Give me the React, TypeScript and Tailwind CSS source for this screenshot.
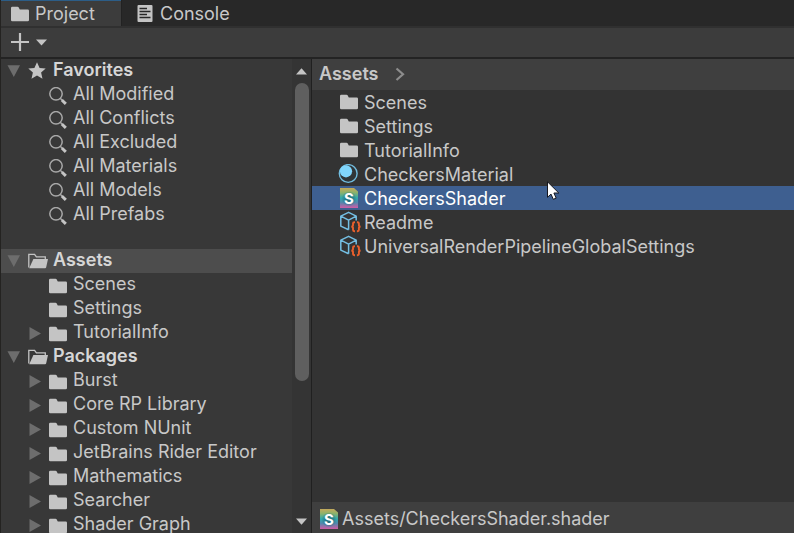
import type { ReactNode } from "react";

function Folder() {
  return (
    <svg viewBox="0 0 18 16" className="h-4 w-[18px] shrink-0" fill="#c4c4c4" aria-hidden="true">
      <path d="M0 2Q0 .7 1.3 .7H6.5Q7.3 .7 7.6 1.3L8.8 3.5H16.7Q18 3.5 18 4.8V14Q18 15.2 16.7 15.2H1.3Q0 15.2 0 14Z" />
    </svg>
  );
}

function OpenFolder() {
  return (
    <svg viewBox="0 0 20 16" className="h-4 w-5 shrink-0" aria-hidden="true">
      <path d="M.8 14.5V1.4H6.6L8.4 3.9H17.3V6.2" fill="none" stroke="#c4c4c4" strokeWidth="1.3" />
      <path d="M5.4 6H20L18.2 14.3Q18 15.2 17 15.2H1.2Z" fill="#c4c4c4" />
    </svg>
  );
}

function Star() {
  return (
    <svg viewBox="0 0 18 18" className="h-[18px] w-[18px] shrink-0" fill="#c4c4c4" aria-hidden="true">
      <path d="M9 .2 11.6 5.9 17.7 6.5 13.1 10.6 14.5 16.7 9 13.4 3.5 16.7 4.9 10.6 .3 6.5 6.4 5.9Z" />
    </svg>
  );
}

function Search() {
  return (
    <svg viewBox="0 0 18 18" className="h-[18px] w-[18px] shrink-0" fill="none" aria-hidden="true">
      <circle cx="7" cy="6.8" r="6.2" stroke="#a8a8a8" strokeWidth="1.5" />
      <path d="M11.2 11.3 13 13" stroke="#a8a8a8" strokeWidth="1.5" />
      <path d="M12.8 13 16.8 16.8" stroke="#c4c4c4" strokeWidth="3" />
    </svg>
  );
}

function Material() {
  return (
    <svg viewBox="0 0 20 20" className="h-5 w-5 shrink-0" aria-hidden="true">
      <circle cx="10.2" cy="9.5" r="8.9" fill="#303638" stroke="#72bde0" strokeWidth="1.4" />
      <circle cx="8" cy="7.3" r="6.1" fill="#80d6fd" />
    </svg>
  );
}

function Shader() {
  return (
    <svg viewBox="0 0 18 20" className="h-5 w-[18px] shrink-0" aria-hidden="true">
      <defs>
        <linearGradient id="shaderFill" x1="0" y1="0" x2="0" y2="1">
          <stop offset="0" stopColor="#c5a95b" />
          <stop offset=".22" stopColor="#8fb26a" />
          <stop offset=".5" stopColor="#2fa9ac" />
          <stop offset=".72" stopColor="#5287ad" />
          <stop offset="1" stopColor="#d05ca5" />
        </linearGradient>
        <radialGradient id="shaderGlow">
          <stop offset="0" stopColor="#17616b" />
          <stop offset=".5" stopColor="#1f7180" stopOpacity=".7" />
          <stop offset="1" stopColor="#1f7180" stopOpacity="0" />
        </radialGradient>
      </defs>
      <path d="M0 0H14L18 3.6V20H0Z" fill="url(#shaderFill)" />
      <circle cx="9" cy="10.8" r="7.6" fill="url(#shaderGlow)" />
      <text x="9" y="16" textAnchor="middle" fontFamily="Inter, sans-serif" fontWeight="700" fontSize="15" fill="#fff">S</text>
    </svg>
  );
}

function Scriptable() {
  return (
    <svg viewBox="0 0 22 22" className="h-[22px] w-[22px] shrink-0" fill="none" aria-hidden="true">
      <path d="M8.6 18.8 .8 15.1V5.2L8.6 1.3 16.2 5.2V9.6M.8 5.2 8.6 9.1 16.2 5.2M8.6 9.1V18.8" stroke="#74bfe3" strokeWidth="1.5" strokeLinejoin="round" />
      <g stroke="#ea602c" strokeWidth="1.9">
        <path d="M15 11.2H14.4Q13 11.2 13 12.6V14.2Q13 15.6 11.3 15.6Q13 15.6 13 17V18.8Q13 20.2 14.4 20.2H15" />
        <path d="M16.9 11.2H17.5Q18.9 11.2 18.9 12.6V14.2Q18.9 15.6 20.6 15.6Q18.9 15.6 18.9 17V18.8Q18.9 20.2 17.5 20.2H16.9" />
      </g>
    </svg>
  );
}

function Arrow({ open }: { open?: boolean }) {
  return (
    <svg viewBox="0 0 14 14" className="h-3.5 w-3.5 shrink-0" fill="#6d6d6d" aria-hidden="true">
      <path d={open ? "M.5 1.3H13L6.8 13Z" : "M1.5 1V14L13 7.5Z"} />
    </svg>
  );
}

function Root({ icon, children, selected }: { icon: ReactNode; children: string; selected?: boolean }) {
  return (
    <button type="button" aria-expanded="true" className={`flex h-6 w-full shrink-0 items-center pl-1.5 text-left font-semibold text-[#d6d6d6] ${selected ? "bg-[#4d4d4d]" : ""}`}>
      <Arrow open />
      <span className="ml-[7px] flex w-[25px] items-center">{icon}</span>
      <span className="pb-0.5 leading-5">{children}</span>
    </button>
  );
}

function Leaf({ icon, children, nested }: { icon: ReactNode; children: string; nested?: boolean }) {
  return (
    <button type="button" className="flex h-6 w-full shrink-0 items-center pl-[27px] text-left">
      <span className="flex w-[21px] items-center">{nested && <Arrow />}</span>
      <span className="flex w-6 items-center pt-0.5">{icon}</span>
      <span className="whitespace-nowrap pb-0.5 leading-5">{children}</span>
    </button>
  );
}

const favorites = ["All Modified", "All Conflicts", "All Excluded", "All Materials", "All Models", "All Prefabs"];
const packages = ["Burst", "Core RP Library", "Custom NUnit", "JetBrains Rider Editor", "Mathematics", "Searcher", "Shader Graph"];
const files: { name: string; icon: ReactNode; selected?: boolean }[] = [
  { name: "Scenes", icon: <Folder /> },
  { name: "Settings", icon: <Folder /> },
  { name: "TutorialInfo", icon: <Folder /> },
  { name: "CheckersMaterial", icon: <Material /> },
  { name: "CheckersShader", icon: <Shader />, selected: true },
  { name: "Readme", icon: <Scriptable /> },
  { name: "UniversalRenderPipelineGlobalSettings", icon: <Scriptable /> },
];

export default function App() {
  return (
    <div className="flex h-screen flex-col overflow-hidden border-l border-[#242321] bg-[#383838] font-['Inter',sans-serif] text-lg text-[#c8c8c8]">
      <div role="tablist" className="flex h-[26px] shrink-0 bg-[#282828]">
        <button type="button" role="tab" aria-selected="true" className="flex w-[120px] items-center border-t border-[#2c5d87] bg-[#3c3c3c] pl-2.5">
          <Folder />
          <span className="ml-[6px] leading-5">Project</span>
        </button>
        <button type="button" role="tab" aria-selected="false" className="flex items-center border-l border-[#222222] pl-[15px]">
          <svg viewBox="0 0 16 17" className="h-[17px] w-4" aria-hidden="true">
            <rect x=".5" width="15" height="17" rx="1" fill="#c4c4c4" />
            <path d="M2.5 3.5H10M2.5 6.5H13.5M2.5 9.5H10M2.5 12.5H13.5" stroke="#282828" strokeWidth="1.4" />
          </svg>
          <span className="ml-[7px] pt-0.5 leading-5">Console</span>
        </button>
      </div>

      <div className="flex h-[33px] shrink-0 items-center border-y-2 border-t-[#303030] border-b-[#232323] bg-[#3c3c3c] pb-px pl-2.5">
        <button type="button" aria-label="Create" className="flex items-center gap-[7px]">
          <svg viewBox="0 0 18 18" className="h-[18px] w-[18px]" aria-hidden="true">
            <path d="M0 9H18M9 0V18" stroke="#c4c4c4" strokeWidth="2.2" />
          </svg>
          <svg viewBox="0 0 11 7" className="h-[7px] w-[11px]" aria-hidden="true">
            <path d="M0 .5H11L5.5 6.5Z" fill="#c4c4c4" />
          </svg>
        </button>
      </div>

      <div className="flex min-h-0 flex-1">
        <nav aria-label="Project folders" className="flex w-[291px] shrink-0 flex-col overflow-hidden">
          <Root icon={<Star />}>Favorites</Root>
          {favorites.map((name) => (
            <Leaf key={name} icon={<Search />}>{name}</Leaf>
          ))}
          <div className="h-[22px] shrink-0" />
          <Root icon={<OpenFolder />} selected>Assets</Root>
          <Leaf icon={<Folder />}>Scenes</Leaf>
          <Leaf icon={<Folder />}>Settings</Leaf>
          <Leaf icon={<Folder />} nested>TutorialInfo</Leaf>
          <Root icon={<OpenFolder />}>Packages</Root>
          {packages.map((name) => (
            <Leaf key={name} icon={<Folder />} nested>{name}</Leaf>
          ))}
        </nav>

        <div className="flex w-5 shrink-0 flex-col items-center border-r border-[#202020] bg-[#343434]">
          <button type="button" aria-label="Scroll up" className="flex h-6 w-full shrink-0 items-center justify-center">
            <svg viewBox="0 0 11 7" className="h-[7px] w-[11px]" fill="#c4c4c4" aria-hidden="true"><path d="M0 6.5H11L5.5 .3Z" /></svg>
          </button>
          <div className="min-h-0 w-3.5 flex-1">
            <div className="h-[70%] rounded-full bg-[#5f5f5f]" />
          </div>
          <button type="button" aria-label="Scroll down" className="flex h-6 w-full shrink-0 items-center justify-center">
            <svg viewBox="0 0 11 7" className="h-[7px] w-[11px]" fill="#c4c4c4" aria-hidden="true"><path d="M0 .5H11L5.5 6.7Z" /></svg>
          </button>
        </div>

        <main className="flex min-w-0 flex-1 flex-col bg-[#333333]">
          <header className="flex h-[31px] shrink-0 items-center gap-[17px] bg-[#3f3f3f] pb-0.5 pl-[7px] font-semibold">
            <button type="button" className="leading-5">Assets</button>
            <svg viewBox="0 0 10 14" className="h-3.5 w-2.5" fill="none" aria-hidden="true">
              <path d="M1.5 1.5 8 7.3 1.5 13" stroke="#8d8d8d" strokeWidth="2.2" />
            </svg>
          </header>
          <div className="flex min-h-0 flex-1 flex-col">
            {files.map((file) => (
              <button key={file.name} type="button" className={`flex h-6 w-full shrink-0 items-center pl-[26px] text-left ${file.selected ? "bg-[#3e5f90] text-white" : ""}`}>
                <span className="flex w-[26px] items-center justify-start">
                  {file.name === "CheckersMaterial" ? file.icon : <span className="pl-0.5">{file.icon}</span>}
                </span>
                <span className="whitespace-nowrap pt-0.5 leading-5">{file.name}</span>
              </button>
            ))}
          </div>
          <footer className="flex h-[31px] shrink-0 items-center gap-1 bg-[#3f3f3f] pl-2 pt-0.5">
            <Shader />
            <span className="leading-5">Assets/CheckersShader.shader</span>
          </footer>
        </main>
      </div>

      <svg viewBox="0 0 13 20" className="pointer-events-none absolute left-[547px] top-[181px] h-5 w-[13px]" aria-hidden="true">
        <path d="M.5 .8V16.3L4 13.1 6.3 18.3 9.2 17.1 6.9 12H11.8Z" fill="#fff" stroke="#15171f" strokeWidth="1" />
      </svg>
    </div>
  );
}
